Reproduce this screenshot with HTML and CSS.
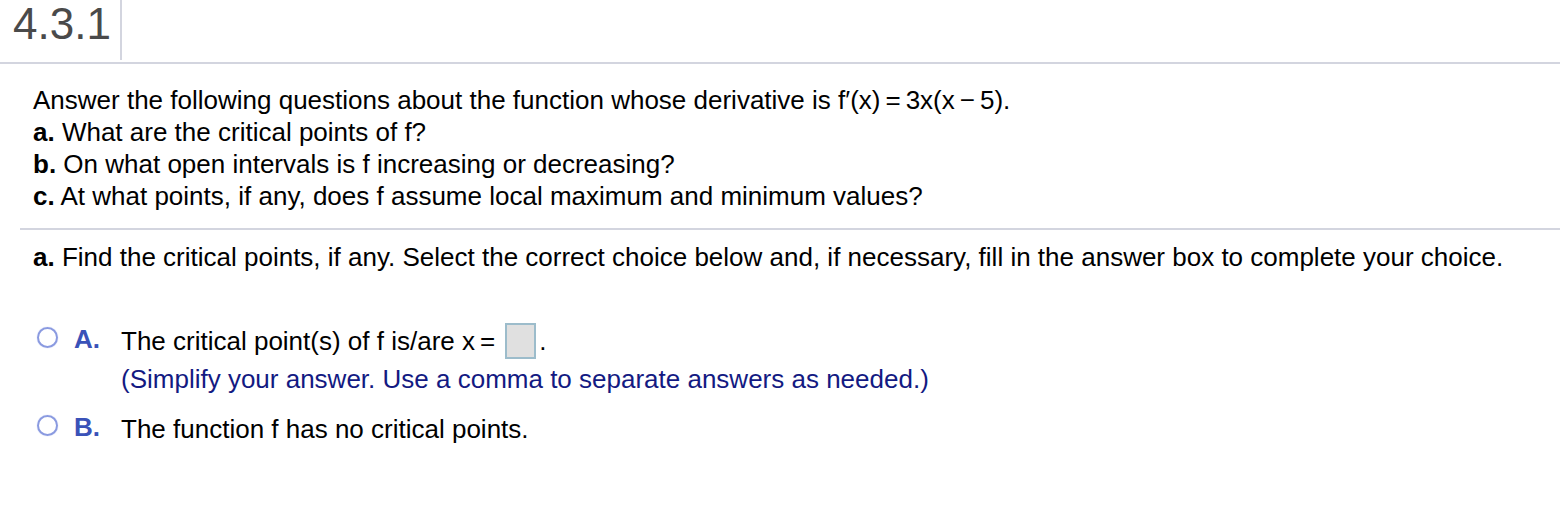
FILE: index.html
```html
<!DOCTYPE html>
<html>
<head>
<meta charset="utf-8">
<link rel="stylesheet" href="styles.css">
</head>
<body>
<div class="header">
  <div class="qnum">4.3.1</div>
</div>
<div class="content">
  <div class="question">
    <div>Answer the following questions about the function whose derivative is <span class="math">f&#8242;(x)<span class="eq">=</span>3x(x<span class="minus">&#8722;</span>5).</span></div>
    <div><b>a.</b> What are the critical points of f?</div>
    <div><b>b.</b> On what open intervals is f increasing or decreasing?</div>
    <div><b>c.</b> At what points, if any, does f assume local maximum and minimum values?</div>
  </div>
  <div class="divider"></div>
  <div class="part">
    <div class="prompt"><b>a.</b> Find the critical points, if any. Select the correct choice below and, if necessary, fill in the answer box to complete your choice.</div>
    <div class="choices">
      <div class="choice">
        <span class="radio"></span>
        <span class="letter">A.</span>
        <div class="choice-body">
          <div class="line">The critical point(s) of f is/are x<span class="eq">=</span><span class="answer-box"></span>.</div>
          <div class="hint">(Simplify your answer. Use a comma to separate answers as needed.)</div>
        </div>
      </div>
      <div class="choice">
        <span class="radio"></span>
        <span class="letter">B.</span>
        <div class="choice-body">
          <div class="line">The function f has no critical points.</div>
        </div>
      </div>
    </div>
  </div>
</div>
</body>
</html>
```
FILE: styles.css
```css
html, body {
  margin: 0;
  padding: 0;
  background: #ffffff;
}
body {
  font-family: "Liberation Sans", Arial, sans-serif;
  color: #000000;
  width: 1560px;
  height: 506px;
  overflow: hidden;
}
.header {
  height: 62px;
  border-bottom: 2px solid #d3d5df;
  display: flex;
}
.qnum {
  width: 107px;
  padding-left: 13px;
  height: 60px;
  border-right: 2px solid #d3d5df;
  font-size: 44px;
  line-height: 48px;
  color: #4a4a4a;
  box-sizing: content-box;
}
.content {
  padding-left: 20px;
}
.question {
  padding-left: 13px;
  margin-top: 20px;
  font-size: 26px;
  line-height: 32px;
}
.math .eq {
  margin: 0 5px;
}
.minus {
  margin: 0 5px;
}
.divider {
  margin-top: 16px;
  height: 2px;
  background: #d3d5df;
}
.part {
  padding-left: 13px;
  font-size: 26px;
  line-height: 32px;
}
.prompt {
  margin-top: 11px;
}
.choices {
  margin-top: 50px;
}
.choice {
  display: flex;
  align-items: flex-start;
  margin-bottom: 16px;
}
.radio {
  width: 17px;
  height: 17px;
  border: 2px solid #8a9ae0;
  border-radius: 50%;
  margin-left: 4px;
  margin-top: 4px;
  flex: none;
  box-shadow: 0 0 1px #a8b4ea;
}
.letter {
  color: #3a52b8;
  font-weight: bold;
  margin-left: 16px;
  width: 47px;
  flex: none;
}
.eq {
  margin: 0 6px 0 5px;
}
.answer-box {
  display: inline-block;
  width: 27px;
  height: 32px;
  background: #e0e0e0;
  border: 2px solid #9cbccb;
  vertical-align: middle;
  margin-left: 4px;
  margin-right: 3px;
  position: relative;
  top: -2px;
}
.line {
  line-height: 36px;
}
.hint {
  color: #131a82;
  margin-top: 2px;
}
```
